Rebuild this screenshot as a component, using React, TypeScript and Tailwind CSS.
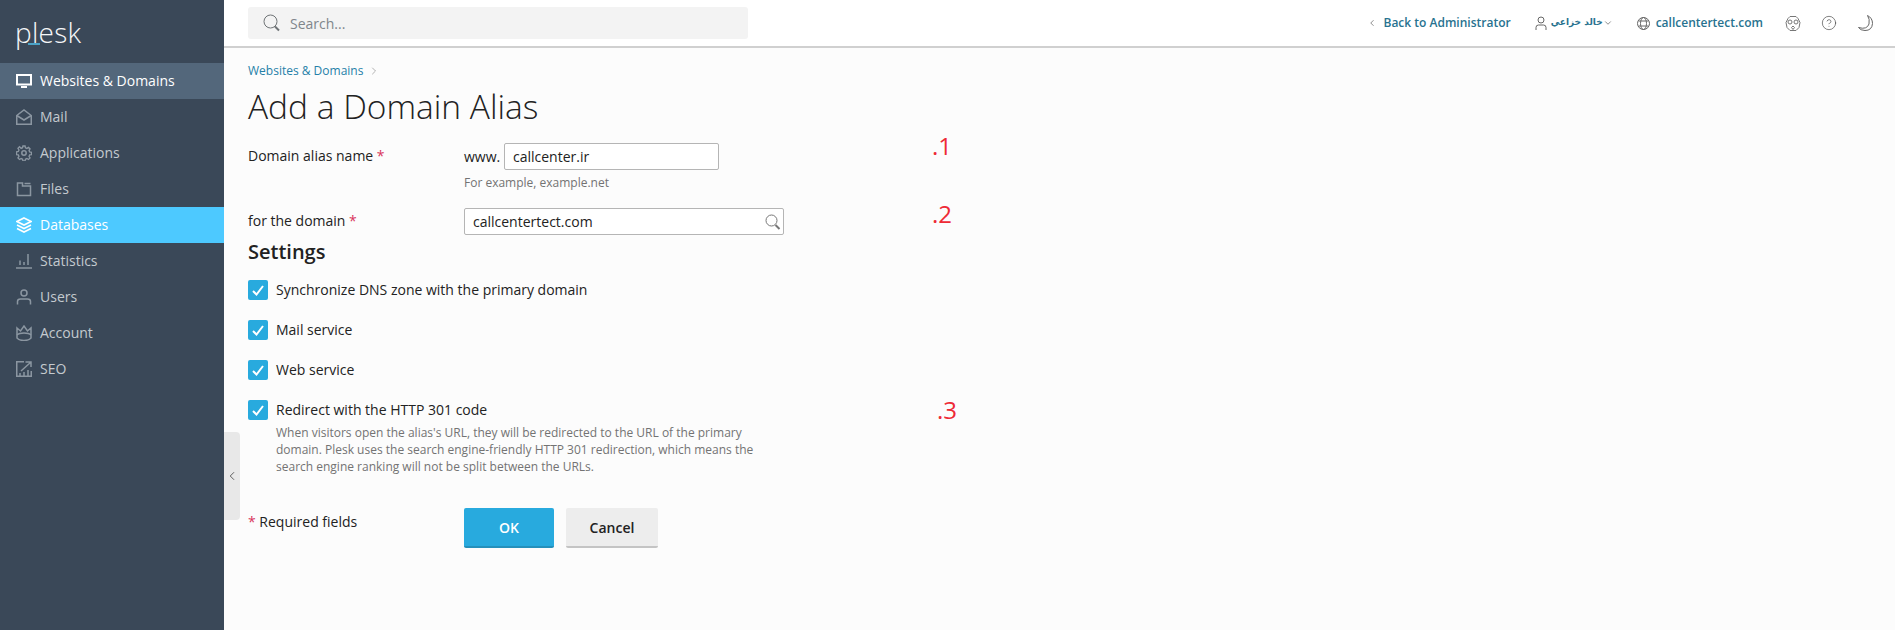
import { ReactNode } from "react";
import { ChevronDown, ChevronLeft, ChevronRight, CircleHelp } from "lucide-react";

const stroke = { fill: "none", stroke: "currentColor", strokeWidth: 1.5 };

function Ico({ children, size = 16 }: { children: ReactNode; size?: number }) {
  return (
    <svg width={size} height={size} viewBox="0 0 16 16" {...stroke} className="shrink-0">
      {children}
    </svg>
  );
}

const navItems: { label: string; active?: boolean; selected?: boolean; icon: ReactNode }[] = [
  {
    label: "Websites & Domains",
    active: true,
    icon: (
      <Ico>
        <rect x="1" y="2" width="14" height="9.500" strokeWidth="2" />
        <path d="M5 14h6" strokeWidth="2" />
      </Ico>
    ),
  },
  {
    label: "Mail",
    icon: (
      <Ico>
        <path d="M.75 6.500 8 1l7.250 5.500v8.750H.75z" />
        <path d="M.75 6.500 8 11l7.250-4.500" />
      </Ico>
    ),
  },
  {
    label: "Applications",
    icon: (
      <Ico>
        <path d="M6.800 1h2.400l.4 2 1.600.7 1.800-1.100 1.700 1.700-1.100 1.800.7 1.600 2 .4v2.400l-2 .4-.7 1.600 1.100 1.800-1.700 1.700-1.800-1.100-1.600.7-.4 2H6.800l-.4-2-1.600-.7-1.800 1.100-1.700-1.700 1.100-1.800-.7-1.600-2-.4V7.400l2-.4.7-1.600-1.100-1.800 1.700-1.700L4.800 3.600l1.600-.7z" transform="translate(.8 .1) scale(.9)" />
        <circle cx="8" cy="8" r="2.200" />
      </Ico>
    ),
  },
  {
    label: "Files",
    icon: (
      <Ico>
        <path d="M1.500 2h5v3h8v9.500h-13z" />
        <path d="M8.500 2.500h6" />
      </Ico>
    ),
  },
  {
    label: "Databases",
    selected: true,
    icon: (
      <Ico>
        <path d="M8 1 15 4.500 8 8 1 4.500z" strokeWidth="1.600" />
        <path d="M1 8l7 3.500L15 8" strokeWidth="1.600" />
        <path d="M1 11.500l7 3.500 7-3.500" strokeWidth="1.600" />
      </Ico>
    ),
  },
  {
    label: "Statistics",
    icon: (
      <Ico>
        <path d="M0 15h16" />
        <path d="M4 12V7.500M8 12V9M12 12V1" />
      </Ico>
    ),
  },
  {
    label: "Users",
    icon: (
      <Ico>
        <circle cx="8" cy="4" r="3" />
        <path d="M1.500 15.500V12.500q0-2.500 3-2.500h7q3 0 3 2.500v3" />
      </Ico>
    ),
  },
  {
    label: "Account",
    icon: (
      <Ico>
        <path d="M1 3l3.500 3L8 1l3.500 5L15 3v10q-2 2.500-7 2.500T1 13z" />
        <path d="M1 10q2-2 7-2t7 2" />
      </Ico>
    ),
  },
  {
    label: "SEO",
    icon: (
      <Ico>
        <path d="M8 .75H.75v14.500H15.250V10" />
        <path d="M5 10 14.500 1.500M9.500 1h5.500v5" />
        <path d="M4 15v-3M8 15v-4M12 15V9" />
      </Ico>
    ),
  },
];

function Sidebar() {
  return (
    <aside className="w-[224px] shrink-0 bg-[#3a4858]">
      <div className="h-[63px] pl-[15px] relative">
        <div className="text-[#f5f7f8] text-[28px] leading-[40px] pt-[12px] font-light tracking-[0.3px]">plesk</div>
        <div className="absolute left-[28px] top-[43px] h-[2px] w-[12px] bg-[#4ba3c7]" />
      </div>
      <nav className="text-[14px]">
        {navItems.map((item) => (
          <div
            key={item.label}
            className={
              "h-[36px] flex items-center gap-[8px] pl-[16px] " +
              (item.active
                ? "bg-[#53677b] text-white"
                : item.selected
                  ? "bg-[#4dc9ff] text-white"
                  : "text-[#c4cacf]")
            }
          >
            <span className={item.active || item.selected ? "text-white" : "text-[#8b96a1]"}>{item.icon}</span>
            <span className="pb-[2px]">{item.label}</span>
          </div>
        ))}
      </nav>
    </aside>
  );
}

function Header() {
  return (
    <header className="h-[48px] shrink-0 bg-white border-b-2 border-[#d0d0d0] flex items-center pl-[24px] pr-[22px] text-[12px] text-[#28728f] font-semibold">
      <div className="w-[500px] h-[32px] rounded-[3px] bg-[#f3f3f3] flex items-center pl-[15px] gap-[9px] text-[14px] font-normal text-[#80868b]">
        <svg width="18" height="18" viewBox="0 0 18 18" fill="none" stroke="#6f7376" strokeWidth="1">
          <circle cx="7.500" cy="7.500" r="6.500" />
          <path d="m12 12.500 4 4" strokeWidth="2" />
        </svg>
        Search...
      </div>
      <div className="flex-1" />
      <ChevronLeft size={10} className="text-[#777] mr-[7px]" />
      <span>Back to Administrator</span>
      <svg width="12" height="15" viewBox="0 0 12 15" fill="none" stroke="#666" strokeWidth="1" className="ml-[24px]">
        <circle cx="6" cy="4" r="3" />
        <path d="M1 14v-2.500Q1 9 3.500 9h5Q11 9 11 11.500V14" />
      </svg>
      <span dir="rtl" className="ml-[10px] w-[46px] text-[9px] font-bold whitespace-nowrap" style={{ fontFamily: "'DejaVu Sans', sans-serif" }}>
        خالد خزاعي
      </span>
      <ChevronDown size={10} className="text-[#777]" />
      <svg width="13" height="13" viewBox="0 0 13 13" fill="none" stroke="#666" strokeWidth="1" className="ml-[24px]">
        <circle cx="6.500" cy="6.500" r="6" />
        <ellipse cx="6.500" cy="6.500" rx="3" ry="6" />
        <path d="M1.500 4h10M1.500 9h10" />
      </svg>
      <span className="ml-[6px]">callcentertect.com</span>
      <svg width="16" height="17" viewBox="0 0 16 17" fill="none" stroke="#777" strokeWidth="1" className="ml-[22px]">
        <path d="M3 3.500 5 1.500h6l2 2 2 4-1 5-3 3H5l-3-3-1-5z" />
        <circle cx="5" cy="7" r="2" />
        <circle cx="11" cy="7" r="2" />
        <path d="M6.500 12.500 8 11l1.500 1.500L8 14.500z" />
      </svg>
      <CircleHelp size={16} strokeWidth={1} className="text-[#444] ml-[20px]" />
      <svg width="15" height="16" viewBox="0 0 15 16" fill="none" stroke="#666" strokeWidth="1" className="ml-[21px]">
        <path d="M9.500.5Q14.500 3 14.500 8.500 14 15.500 7 15.500 2.500 15.500.5 12.500 9 15 11 9 12 4 9.500.5Z" />
      </svg>
    </header>
  );
}

function Req() {
  return <span className="text-[#d9365d]"> *</span>;
}

function Check({ label, hint }: { label: string; hint?: ReactNode }) {
  return (
    <div className="flex mb-[20px]">
      <div className="w-[20px] h-[20px] rounded-[2px] bg-[#28aade] flex items-center justify-center shrink-0">
        <svg width="12" height="11" viewBox="0 0 12 11" fill="none" stroke="white" strokeWidth="2">
          <path d="m1 6 3.500 3.500L11 1" />
        </svg>
      </div>
      <div className="ml-[8px]">
        <div className="text-[14px] leading-[20px] text-[#222]">{label}</div>
        {hint && <div className="w-[490px] text-[12px] leading-[17px] text-[#737373] mt-[4px]">{hint}</div>}
      </div>
    </div>
  );
}

function Form() {
  return (
    <main className="flex-1 bg-[#fcfcfc] relative pl-[24px] text-[#222]">
      <div className="pt-[14px] h-[32px] flex items-center text-[12px] leading-[18px] text-[#2580a8]">
        Websites &amp; Domains
        <ChevronRight size={12} strokeWidth={1} className="text-[#666] ml-[5px]" />
      </div>
      <h1 className="mt-[6px] text-[33.500px] leading-[40px] font-light text-[#222]">Add a Domain Alias</h1>

      <div className="mt-[17px] flex">
        <div className="w-[216px] text-[14px] leading-[20px] pt-[3px]">
          Domain alias name
          <Req />
        </div>
        <div>
          <div className="flex items-center text-[14px]">
            <span className="w-[40px]">www.</span>
            <div className="w-[215px] h-[27px] bg-white border border-[#b5b5b5] rounded-[2px] pl-[8px] leading-[25px]">callcenter.ir</div>
          </div>
          <div className="text-[12px] leading-[16px] text-[#737373] mt-[5px]">For example, example.net</div>
        </div>
      </div>

      <div className="mt-[17px] flex">
        <div className="w-[216px] text-[14px] leading-[20px] pt-[3px]">
          for the domain
          <Req />
        </div>
        <div className="w-[320px] h-[27px] bg-white border border-[#b5b5b5] rounded-[2px] pl-[8px] text-[14px] leading-[25px] flex justify-between items-center pr-[2px]">
          callcentertect.com
          <svg width="16" height="16" viewBox="0 0 16 16" fill="none" stroke="#777" strokeWidth="1">
            <circle cx="6.500" cy="6.500" r="5.500" />
            <path d="m10.500 11 4 4" strokeWidth="2" />
          </svg>
        </div>
      </div>

      <h2 className="mt-[5px] text-[20px] leading-[24px] font-semibold">Settings</h2>

      <div className="mt-[16px]">
        <Check label="Synchronize DNS zone with the primary domain" />
        <Check label="Mail service" />
        <Check label="Web service" />
        <Check
          label="Redirect with the HTTP 301 code"
          hint="When visitors open the alias's URL, they will be redirected to the URL of the primary domain. Plesk uses the search engine-friendly HTTP 301 redirection, which means the search engine ranking will not be split between the URLs."
        />
      </div>

      <div className="mt-[33px] flex">
        <div className="w-[216px] text-[14px] leading-[20px] pt-[4px]">
          <span className="text-[#d9365d]">*</span> Required fields
        </div>
        <button className="w-[90px] h-[40px] rounded-[2px] bg-[#28aade] border-b-2 border-[#2590bb] text-white text-[14px] font-semibold">OK</button>
        <button className="w-[92px] h-[40px] ml-[12px] rounded-[2px] bg-[#ededed] border-b-2 border-[#c4c4c4] text-[#222] text-[14px] font-semibold">Cancel</button>
      </div>

      {/* handle that collapses the sidebar */}
      <div className="absolute left-0 top-[384px] w-[16px] h-[88px] bg-[#e8e8e8] rounded-r-[4px] flex items-center">
        <ChevronLeft size={14} strokeWidth={1.2} className="text-[#222] ml-[1px]" />
      </div>

      {/* red numbers pasted over the screenshot */}
      <span className="absolute left-[708px] top-[82px] text-[24px] leading-[32px] text-[#ee2a35]">.1</span>
      <span className="absolute left-[708px] top-[150px] text-[24px] leading-[32px] text-[#ee2a35]">.2</span>
      <span className="absolute left-[713px] top-[346px] text-[24px] leading-[32px] text-[#ee2a35]">.3</span>
    </main>
  );
}

export default function App() {
  return (
    <div className="flex h-[630px] overflow-hidden" style={{ fontFamily: "'Open Sans', sans-serif" }}>
      <Sidebar />
      <div className="flex-1 flex flex-col">
        <Header />
        <Form />
      </div>
    </div>
  );
}
